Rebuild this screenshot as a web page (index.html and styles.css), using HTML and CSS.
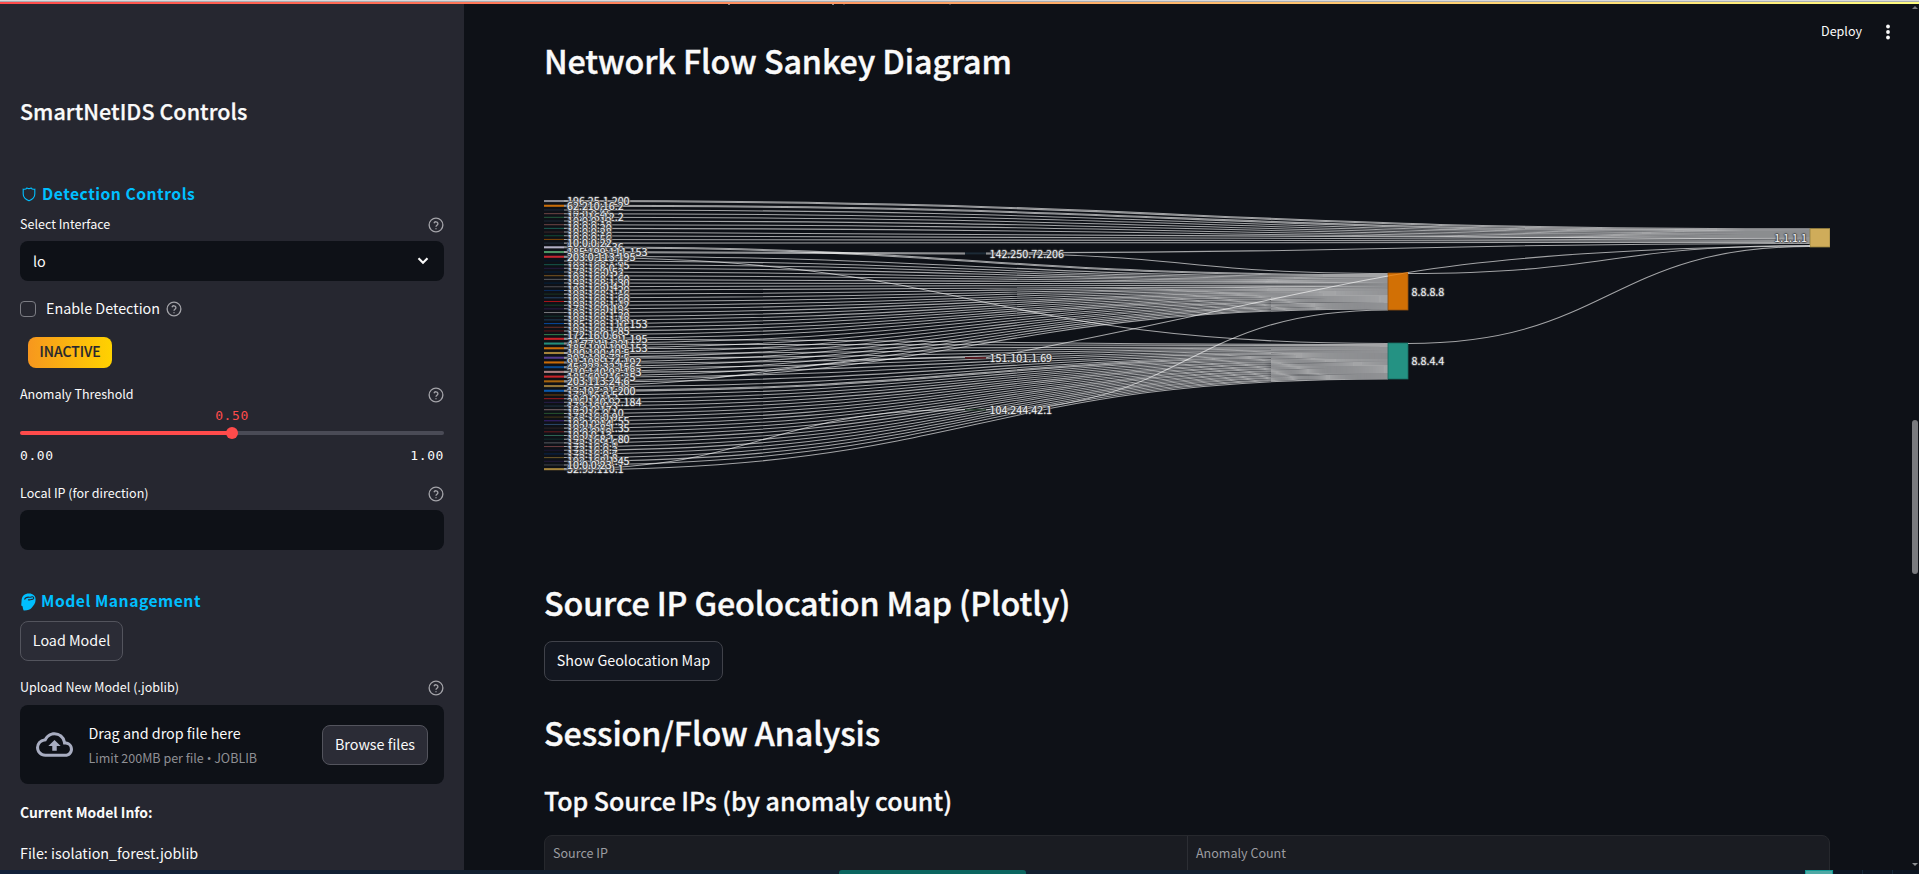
FILE: index.html
```html
<!DOCTYPE html>
<html lang="en">
<head>
<meta charset="utf-8">
<title>SmartNetIDS</title>
<link rel="stylesheet" href="styles.css">
</head>
<body>
<svg class="defs" width="0" height="0">
  <symbol id="help" viewBox="0 0 24 24">
    <circle cx="12" cy="12" r="10.3"/>
    <path d="M9 9.4a3 3 0 0 1 5.9.8c0 2-2.9 2.4-2.9 4.3M12 17v1.2"/>
  </symbol>
</svg>
<div class="window-edge"></div>
<div class="decoration"></div>
<div class="app">
  <aside class="sidebar">
    <h2 class="side-title">SmartNetIDS Controls</h2>

    <h3 class="section detection"><svg class="shield" viewBox="0 0 14 15"><path d="M1.2 2.2Q4 2.7 4.9 1Q7 2.2 9.1 1Q10 2.7 12.8 2.2V7Q12.8 11.500 7 13.800Q1.200 11.500 1.200 7Z"/></svg><span>Detection Controls</span></h3>
    <div class="field-label l-select"><span>Select Interface</span><svg class="help"><use href="#help"/></svg></div>
    <div class="select"><span>lo</span><svg viewBox="0 0 12 8"><path d="M2 2l4 4 4-4"/></svg></div>

    <div class="check-row"><span class="checkbox"></span><span class="check-text">Enable Detection</span><svg class="help"><use href="#help"/></svg></div>
    <div class="badge"><span>INACTIVE</span></div>

    <div class="field-label l-threshold"><span>Anomaly Threshold</span><svg class="help"><use href="#help"/></svg></div>
    <div class="slider-value">0.50</div>
    <div class="slider"><span class="thumb"></span></div>
    <div class="ticks"><span>0.00</span><span>1.00</span></div>

    <div class="field-label l-ip"><span>Local IP (for direction)</span><svg class="help"><use href="#help"/></svg></div>
    <div class="input"></div>

    <h3 class="section model"><svg class="head" viewBox="0 0 15 18"><path class="fill" d="M.6 7.500C.8 3 3.600.5 8 .5c4 0 6.600 2.300 6.600 6.200 0 3.500-2 5.600-3.900 8.100-1.500 1.900-4 2.800-8 2.700-.9-1.500-.8-2.700-1.200-4.200L.2 12.500Z"/><path class="cut" d="M3.500 6.500C4.500 4 7 4 8.500 4.200c1.500.2 2-.8 3.300-.4 1.600.6 1 2.700-.8 2.600-1.600 0-2.500.8-4 .4"/></svg><span>Model Management</span></h3>
    <button class="button load">Load Model</button>

    <div class="field-label l-upload"><span>Upload New Model (.joblib)</span><svg class="help"><use href="#help"/></svg></div>
    <div class="uploader">
      <svg class="cloud" viewBox="0 0 24 24"><path d="M19.350 10.040A7.490 7.490 0 0 0 12 4C9.110 4 6.600 5.640 5.350 8.040A5.994 5.994 0 0 0 0 14c0 3.310 2.690 6 6 6h13c2.760 0 5-2.240 5-5 0-2.640-2.050-4.780-4.650-4.960zM19 18H6c-2.210 0-4-1.790-4-4 0-2.050 1.530-3.760 3.560-3.970l1.070-.11.500-.95A5.469 5.469 0 0 1 12 6c2.620 0 4.880 1.860 5.390 4.430l.3 1.500 1.530.11A2.980 2.980 0 0 1 22 15c0 1.650-1.350 3-3 3zM8 13h2.550v3h2.900v-3H16l-4-4z"/></svg>
      <div class="drop"><span class="drop-main">Drag and drop file here</span><span class="drop-sub">Limit 200MB per file <span class="dot">•</span> JOBLIB</span></div>
      <button class="button browse">Browse files</button>
    </div>
    <p class="info bold">Current Model Info:</p>
    <p class="info file">File: isolation_forest.joblib</p>
  </aside>

  <main class="main">
    <div class="toolbar"><span>Deploy</span><svg viewBox="0 0 6 16"><circle cx="3" cy="2.500" r="1.900"/><circle cx="3" cy="8" r="1.900"/><circle cx="3" cy="13.500" r="1.900"/></svg></div>
    <h1 class="h-sankey">Network Flow Sankey Diagram</h1>
    <svg class="sankey" id="sankey" width="1286" height="450" viewBox="544 100 1286 450"></svg>
    <h1 class="h-map">Source IP Geolocation Map (Plotly)</h1>
    <button class="button show-map">Show Geolocation Map</button>
    <h1 class="h-session">Session/Flow Analysis</h1>
    <h2 class="h-top">Top Source IPs (by anomaly count)</h2>
    <div class="table"><div>Source IP</div><div>Anomaly Count</div></div>
  </main>
  <div class="scrollbar"><i class="up"></i><i class="bar"></i><i class="down"></i></div>
</div>
<div class="taskbar"><i class="task"></i><i class="tray"></i><i class="tick"></i><i class="tick"></i></div>
<script src="sankey.js"></script>
</body>
</html>
```
FILE: styles.css
```css
* { box-sizing: border-box; }
html, body { margin: 0; height: 874px; overflow: hidden; background: #0e1117; }
body { font-family: "Noto Sans CJK SC", "Noto Sans", sans-serif; font-size: 14.33px; color: #fafafa; display: flex; flex-direction: column; }
h1, h2, h3, p { margin: 0; white-space: nowrap; }
.defs { position: absolute; }
.window-edge { height: 2px; flex: none; background: linear-gradient(#d9dadb 50%, #a9adb3 50%); }
.decoration { height: 2px; flex: none; background: linear-gradient(90deg, #ff4b4b, #fffd80); }
.app { display: flex; height: 866px; flex: none; overflow: hidden; }

.sidebar { width: 464px; flex: none; background: #262730; padding: 0 20px; display: flex; flex-direction: column; }
.sidebar > * { flex: none; }
.side-title { height: 30px; line-height: 30px; margin-top: 92px; font-size: 21.5px; font-weight: 500; -webkit-text-stroke: .25px; letter-spacing: .05px; }
.section { height: 24px; display: flex; align-items: center; color: #00bfff; font-size: 15.7px; font-weight: 700; letter-spacing: .5px; line-height: 24px; }
.detection { margin-top: 56px; }
.model span { padding-bottom: 2px; }
.shield { width: 14px; height: 15px; margin: 1px 6px 0 2px; fill: none; stroke: #00bfff; stroke-width: 1.1; }
.head { width: 15px; height: 18px; margin: 0 5px 0 1px; }
.head .fill { fill: #00bfff; }
.head .cut { fill: none; stroke: #262730; stroke-width: 1.1; }
.field-label { height: 20px; line-height: 18px; font-size: 12.54px; display: flex; justify-content: space-between; align-items: center; }
.field-label span { padding-bottom: 2px; }
.help { width: 16px; height: 16px; fill: none; stroke: #a3a3a8; stroke-width: 2; }
.l-select { margin-top: 9px; }
.select { margin-top: 6px; height: 40px; border-radius: 8px; background: #0e1117; padding: 0 14px 2px 13px; display: flex; align-items: center; justify-content: space-between; }
.select svg { width: 14px; height: 9px; fill: none; stroke: #fafafa; stroke-width: 1.9; }
.check-row { margin-top: 18px; height: 20px; display: flex; align-items: center; line-height: 20px; }
.checkbox { width: 16px; height: 16px; border: 1px solid #7c7d84; border-radius: 4px; margin-right: 10px; }
.check-text { margin-right: 6px; padding-bottom: 2px; }
.badge { margin: 18px 0 0 8px; width: 84px; height: 31px; border-radius: 8px; background: linear-gradient(90deg, #f7971e, #ffd200); color: #262730; font-weight: 500; font-size: 13.9px; line-height: 29px; text-align: center; -webkit-text-stroke: .15px; }
.l-threshold { margin-top: 17px; }
.slider-value { margin-top: 2px; height: 18px; text-align: center; color: #ff4b4b; font: 13px/18px "DejaVu Sans Mono", monospace; letter-spacing: .6px; }
.slider { margin-top: 6px; height: 4px; border-radius: 2px; background: linear-gradient(90deg, #ff4b4b 50%, #4a4b56 50%); display: flex; align-items: center; justify-content: center; }
.thumb { width: 12px; height: 12px; border-radius: 50%; background: #ff4b4b; flex: none; }
.ticks { margin-top: 12px; height: 18px; display: flex; justify-content: space-between; font: 13px/18px "DejaVu Sans Mono", monospace; letter-spacing: .6px; }
.l-ip { margin-top: 19px; }
.input { margin-top: 6px; height: 40px; border-radius: 8px; background: #0e1117; }
.model { margin-top: 40px; }
.button { font: inherit; color: #fafafa; background: #2b2c36; border: 1px solid #53545d; border-radius: 8px; height: 40px; padding: 0 0 2px; line-height: 36px; flex: none; white-space: nowrap; }
.load { margin-top: 7px; width: 103px; }
.l-upload { margin-top: 17px; }
.uploader { margin-top: 7px; height: 79px; border-radius: 8px; background: #0e1117; display: flex; align-items: center; padding: 0 16px; }
.cloud { width: 37px; height: 37px; fill: #a8adc1; margin-right: 15.500px; }
.drop { flex: 1; display: flex; flex-direction: column; padding-top: 1px; }
.drop-main { line-height: 24px; }
.drop-sub { line-height: 25px; font-size: 12.54px; color: #8e8f94; }
.dot { font-family: "Open Sans", sans-serif; line-height: 1; }
.browse { width: 106px; }
.info { height: 24px; line-height: 22px; margin-top: 17px; }
.bold { font-weight: 700; font-size: 13.9px; }

.main { flex: 1; padding: 0 82px 0 80px; display: flex; flex-direction: column; align-items: flex-start; position: relative; }
.main > * { flex: none; }
.main::before { content: ""; position: absolute; left: 264px; top: 0; width: 2px; height: 1px; background: #85878b; box-shadow: 104px 0 #85878b, 115px 0 #3c3e44, 221px 0 #3c3e44; }
.toolbar { position: absolute; right: 21px; top: 18px; height: 20px; display: flex; align-items: center; gap: 23px; font-size: 12.54px; line-height: 18px; }
.toolbar span { padding-bottom: 2px; }
.toolbar svg { width: 6px; height: 16px; fill: #fafafa; }
h1 { height: 44px; line-height: 40px; font-size: 32.25px; font-weight: 500; -webkit-text-stroke: .4px; letter-spacing: -.1px; }
.h-sankey { margin-top: 36px; }
.sankey { margin-top: 16px; display: block; }
.sankey text { font-size: 10.74px; fill: #f2f5fa; text-shadow: 0 0 1px #4c4c4c, 1px 0 1px #4c4c4c, -1px 0 1px #4c4c4c, 0 1px 1px #4c4c4c, 0 -1px 1px #4c4c4c; }
.h-map { margin-top: 32px; letter-spacing: -.13px; }
.show-map { margin-top: 15px; width: 179px; background: #131720; border-color: #40424a; }
.h-session { margin-top: 31px; }
.h-top { margin-top: 30px; height: 34px; line-height: 28px; font-size: 25px; font-weight: 500; -webkit-text-stroke: .3px; letter-spacing: -.08px; }
.table { margin-top: 15px; width: 1286px; height: 60px; border: 1px solid #26282d; border-radius: 8px; background: #1a1c22; display: flex; font-size: 12.54px; line-height: 33px; color: #9c9da1; }
.table div { width: 50%; padding-left: 8px; }
.table div + div { border-left: 1px solid #2c2e34; }
.scrollbar { width: 7px; height: 866px; flex: none; display: flex; flex-direction: column; align-items: flex-start; }
.up { border: 3px solid transparent; border-top: 0; border-bottom: 3px solid #77797d; margin-top: 2px; }
.bar { width: 6px; height: 154px; border-radius: 3px; background: #7a7b7f; margin-top: 411px; }
.down { border: 3px solid transparent; border-bottom: 0; border-top: 3px solid #8b8d90; margin-top: 289px; }

.taskbar { height: 4px; flex: none; background: linear-gradient(90deg, #12213a 0, #12202f 30%, #12202f 95.500%, #0c1522 95.600%); display: flex; }
.task { margin-left: 839px; width: 187px; background: #0b6660; border-radius: 3px 3px 0 0; }
.tray { margin-left: 779px; width: 28px; background: #4fa8a4; border: 1px solid #0f9c96; border-bottom: 0; }
.tick { margin-left: 29px; width: 1px; background: #16283a; }
```
FILE: sankey.js
```js
const NS = 'http://www.w3.org/2000/svg';
const svg = document.getElementById('sankey');
const UNIT = 1.04, PAD = 2.643;

function add(name, attrs, text) {
  const el = document.createElementNS(NS, name);
  for (const k in attrs) el.setAttribute(k, attrs[k]);
  if (text) el.textContent = text;
  svg.appendChild(el);
}

// label, colour, targets (one unit each)
const A = 'a', B = 'b', C = 'c';
const rows = [
  ['196.25.1.200', '#8b8c94', [A, A]], ['62.210.16.2', '#c86c08', [A, A]],
  ['10.0.0.67', '#1d2836', [A]], ['10.0.0.45', '#6b4343', [A]], ['172.16.12.2', '#24573a', [A]],
  ['10.0.0.12', '#1d2836', [A]], ['10.0.0.18', '#6b4343', [A]], ['10.0.0.20', '#1b5a50', [A]],
  ['10.0.0.28', '#3a2528', [A]], ['10.0.0.16', '#124a35', [A]], ['10.0.0.56', '#7a4508', [A]],
  ['10.0.0.22', '#1d2836', [A]],
  ['51.158.1.36', '#b3b0c4', [B, B]], ['185.199.111.153', '#4c9464', ['m', 'm']], ['203.0.113.195', '#c42730', [B, C]]
];
const midLabels = ['192.168.1.2', '192.168.1.95', '192.168.0.1', '172.16.0.52', '192.168.1.4', '192.168.1.60', '192.168.1.30', '172.16.0.4', '192.168.1.20', '192.168.1.16', '192.168.1.60', '192.168.1.50', '192.168.1.12', '172.16.0.19', '192.168.1.22', '192.168.1.30', '192.168.1.18', '185.199.110.153', '192.168.1.15', '192.168.1.85', '172.16.0.6'];
const midColors = ['#04172b', '#155449', '#241a3c', '#04203c', '#76531f', '#55575b', '#04203c', '#4b4b50', '#0a2c5c', '#1a3322', '#264464', '#a31418', '#14402c', '#281c44', '#75767a', '#12332c', '#1d3c56', '#07479a', '#693027', '#601116', '#317f50'];
midLabels.forEach((l, i) => rows.push([l, midColors[i], [B]]));
[['151.101.101.195', '#c82228'], ['41.77.11.221', '#248e7c'], ['185.199.109.153', '#c86c08'], ['190.190.40.5', '#a5843c'],
 ['203.108.72.5', '#523a8c'], ['91.108.174.192', '#c86c08'], ['45.222.32.156', '#09488c'], ['210.140.92.183', '#aa7e80'],
 ['185.60.216.35', '#c82228'], ['203.113.24.6', '#a5630d']].forEach(r => rows.push([r[0], r[1], [B, C]]));
rows.push(['23.216.10.90', '#94773a', ['n', C]], ['13.107.21.200', '#0a57aa', [C, C]]);
const lowLabels = ['172.16.0.5', '10.0.0.11', '216.140.92.184', '172.16.0.3', '10.0.0.17', '172.16.0.10', '172.16.0.9', '192.168.1.55', '10.0.0.14', '192.168.1.35', '10.0.0.19', '10.0.0.13', '192.168.1.80', '172.16.4.6', '172.16.0.1', '172.16.0.2', '172.16.0.7', '172.16.0.8', '192.168.1.45', '10.0.0.23'];
const lowColors = ['#6b430e', '#951a1f', '#261c48', '#1d3444', '#776466', '#25512f', '#453716', '#3a2278', '#2a4666', '#2c2426', '#671b1e', '#2c6350', '#0f2d2c', '#54575d', '#693c40', '#1b1634', '#07244c', '#6a5628', '#241a3c', '#3e4248'];
lowLabels.forEach((l, i) => rows.push([l, lowColors[i], [C]]));
rows.push(['52.95.110.1', '#a5843c', ['o', C]]);

function stroke(d) {
  add('path', { d, fill: 'none', stroke: '#fff', 'stroke-opacity': .62, 'stroke-width': UNIT });
}
function link(x0, y0, x1, y1) {
  const m = (x0 + x1) / 2, h = UNIT / 2;
  stroke(`M${x0},${y0 + h}C${m},${y0 + h} ${m},${y1 + h} ${x1},${y1 + h}`);
}

const X = { a: 1810, b: 1388, c: 1388, m: 965, n: 965, o: 965 };
const next = { a: 228.3, b: 273 + UNIT, c: 343, m: 252.4, n: 357.3, o: 409.2 };
let y = 200;
rows.forEach(r => {
  r.y = y;
  r[2].forEach((t, i) => { link(564, y + i * UNIT, X[t], next[t]); next[t] += UNIT; });
  r.h = r[2].length * UNIT;
  y += r.h + PAD;
});
link(986, 252.4, 1810, next.a);
link(986, 253.4, 1388, 273);
link(986, 409.2, 1388, next.b);

[[1388, 273, 20, 37, '#d27005', '#935010'], [1388, 343, 20, 36, '#249283', '#1b6b62'], [1810, 228.5, 20, 18.5, '#cfac5a', '#95803f'],
 [965, 252.4, 21, 2, '#1c2a36'], [965, 357, 21, 1.7, '#5e1a22'], [965, 409, 21, 1.5, '#28402f']].forEach(n =>
  add('rect', { x: n[0], y: n[1], width: n[2], height: n[3], fill: n[4], stroke: n[5] || 'none', 'stroke-width': .8 }));
rows.forEach(r => add('rect', { x: 544, y: r.y, width: 20, height: r.h, fill: r[1] }));
stroke('M986,357.8C1120,335 1270,297 1388,276');
add('path', { d: 'M1388,276L1408,272.500', fill: 'none', stroke: '#e88a24', 'stroke-width': 1 });
stroke('M1408,272.500C1500,257 1650,247 1810,246');
link(1408, 273, 1810, next.a + 2 * UNIT);
link(1408, 343, 1810, next.a + 3 * UNIT);

const front = ['62.210.16.2', '10.0.0.22', '185.199.111.153', '203.0.113.195', '172.16.0.6', '203.113.24.6', '10.0.0.23'];
const label = r => add('text', { x: 567, y: r.y + r.h / 2 + 4 }, r[0]);
rows.filter(r => !front.includes(r[0])).forEach(label);
rows.filter(r => front.includes(r[0])).forEach(label);
add('text', { x: 989.5, y: 258 }, '142.250.72.206');
add('text', { x: 989.5, y: 362 }, '151.101.1.69');
add('text', { x: 989.5, y: 414 }, '104.244.42.1');
add('text', { x: 1411.5, y: 296 }, '8.8.8.8');
add('text', { x: 1411.5, y: 365 }, '8.8.4.4');
add('text', { x: 1807, y: 242, 'text-anchor': 'end' }, '1.1.1.1');
```
